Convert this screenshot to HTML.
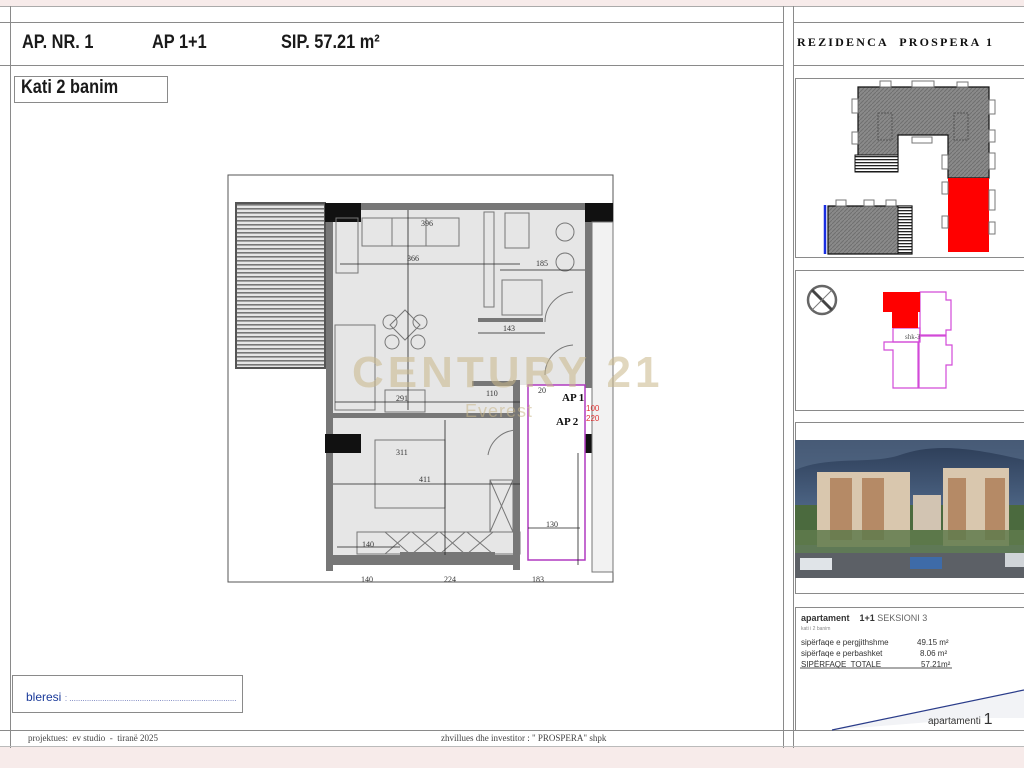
<!DOCTYPE html>
<html><head><meta charset="utf-8">
<style>
*{margin:0;padding:0;box-sizing:border-box}
body{width:1024px;height:768px;background:#fff;position:relative;overflow:hidden;font-family:"Liberation Sans",sans-serif;color:#111}
.a{position:absolute}
.hl{position:absolute;height:0;border-top:1.5px solid #8a8a8a}
.vl{position:absolute;width:0;border-left:1.5px solid #8a8a8a}
.box{position:absolute;border:1.5px solid #8a8a8a}
.t{position:absolute;white-space:nowrap}
.ti{font-size:19px;font-weight:bold;transform:scaleX(.86);transform-origin:left;color:#1a1a1a}
</style></head><body>
<div class="a" style="left:0;top:0;width:1024px;height:6px;background:#f7ebea"></div>
<div class="a" style="left:0;top:747px;width:1024px;height:21px;background:#f7ebea"></div>
<div class="hl" style="left:0;top:6px;width:1024px;border-color:#aaa"></div>
<div class="hl" style="left:0;top:22px;width:783px"></div>
<div class="hl" style="left:0;top:65px;width:783px"></div>
<div class="hl" style="left:793px;top:22px;width:231px"></div>
<div class="hl" style="left:793px;top:65px;width:231px"></div>
<div class="vl" style="left:10px;top:6px;height:742px"></div>
<div class="vl" style="left:783px;top:6px;height:742px"></div>
<div class="vl" style="left:793px;top:6px;height:742px"></div>
<div class="hl" style="left:0;top:730px;width:1024px"></div>
<div class="hl" style="left:0;top:746px;width:1024px;border-color:#bbb"></div>

<div class="t ti" style="left:22px;top:32px">AP. NR. 1</div>
<div class="t ti" style="left:152px;top:32px">AP 1+1</div>
<div class="t ti" style="left:281px;top:32px">SIP. 57.21 m²</div>
<div class="box" style="left:14px;top:76px;width:154px;height:27px"></div>
<div class="t ti" style="left:21px;top:77px">Kati 2 banim</div>
<div class="t" style="left:797px;top:35px;font-size:12px;font-weight:bold;font-family:'Liberation Serif',serif;letter-spacing:2.2px">REZIDENCA&nbsp; PROSPERA 1</div>

<div class="box" style="left:12px;top:675px;width:231px;height:38px"></div>
<div class="t" style="left:26px;top:690px;font-size:12px;color:#1a3a9a">bleresi <span style="color:#7b86c0;font-size:9px;letter-spacing:-0.3px">: ............................................................................</span></div>
<div class="t" style="left:28px;top:733px;font-size:9px;font-family:'Liberation Serif',serif;color:#444">projektues:&nbsp; ev studio &nbsp;-&nbsp; tiranë 2025</div>
<div class="t" style="left:441px;top:733px;font-size:9px;font-family:'Liberation Serif',serif;color:#444">zhvillues dhe investitor : " PROSPERA" shpk</div>

<div class="box" style="left:795px;top:78px;width:240px;height:180px"></div>
<div class="box" style="left:795px;top:270px;width:240px;height:141px"></div>
<div class="box" style="left:795px;top:422px;width:240px;height:172px"></div>
<div class="box" style="left:795px;top:607px;width:240px;height:124px"></div>

<svg class="a" style="left:0;top:0" width="1024" height="768">
<defs>
<pattern id="hs" width="4" height="4" patternUnits="userSpaceOnUse"><rect width="4" height="4" fill="#8a8a8a"/><path d="M0 4L4 0" stroke="#6f6f6f" stroke-width="1"/></pattern>
<pattern id="bal" width="6" height="4" patternUnits="userSpaceOnUse"><rect width="6" height="4" fill="#e6e6e6"/><rect y="0" width="6" height="1.6" fill="#777"/></pattern>
<pattern id="wh" width="3" height="3" patternUnits="userSpaceOnUse"><rect width="3" height="3" fill="#fff"/><rect width="3" height="1.3" fill="#222"/></pattern>
<linearGradient id="sky" x1="0" y1="0" x2="0" y2="1"><stop offset="0" stop-color="#2b3b55"/><stop offset=".5" stop-color="#4d6585"/><stop offset="1" stop-color="#6a7c8e"/></linearGradient>
</defs>
<path d="M858 87H989V178H948V135H898V170H858Z" fill="url(#hs)" stroke="#111" stroke-width="1.2"/>
<rect x="855" y="155" width="43" height="17" fill="url(#wh)" stroke="#111"/>
<rect x="948" y="178" width="41" height="74" fill="#f00"/>
<path d="M828 206H912V254H828Z" fill="url(#hs)" stroke="#111" stroke-width="1.2"/>
<rect x="898" y="206" width="14" height="48" fill="url(#wh)" stroke="#111"/>
<line x1="825" y1="205" x2="825" y2="254" stroke="#1a2ee0" stroke-width="2.5"/>
<g fill="#fff" stroke="#777" stroke-width="1"><rect x="880" y="81" width="11" height="6"/><rect x="912" y="81" width="22" height="6"/><rect x="957" y="82" width="11" height="5"/><rect x="852" y="99" width="6" height="14"/><rect x="852" y="132" width="6" height="12"/><rect x="989" y="100" width="6" height="14"/><rect x="989" y="130" width="6" height="12"/><rect x="989" y="153" width="6" height="16"/><rect x="942" y="155" width="6" height="14"/><rect x="942" y="182" width="6" height="12"/><rect x="942" y="216" width="6" height="12"/><rect x="989" y="190" width="6" height="20"/><rect x="989" y="222" width="6" height="12"/><rect x="836" y="200" width="10" height="6"/><rect x="864" y="200" width="10" height="6"/><rect x="886" y="200" width="10" height="6"/><rect x="912" y="137" width="20" height="6"/></g>
<rect x="878" y="113" width="14" height="27" fill="none" stroke="#555" stroke-dasharray="2 1"/>
<rect x="954" y="113" width="14" height="27" fill="none" stroke="#555" stroke-dasharray="2 1"/>
<circle cx="822" cy="300" r="14" fill="none" stroke="#666" stroke-width="2.5"/>
<line x1="812" y1="290" x2="832" y2="310" stroke="#444" stroke-width="3"/><line x1="832" y1="290" x2="812" y2="310" stroke="#777" stroke-width="1"/>
<path d="M920 292H946V300H951V330H946V335H920Z" fill="none" stroke="#d24ad8" stroke-width="1.2"/>
<path d="M919 336H946V345H952V365H946V388H919Z" fill="none" stroke="#d24ad8" stroke-width="1.2"/>
<path d="M894 342H918V388H893V350H884V342Z" fill="none" stroke="#d24ad8" stroke-width="1.2"/>
<path d="M893 328H920V342H893Z" fill="none" stroke="#d24ad8" stroke-width="1.2"/>
<path d="M883 292H920V312H918V328H892V312H883Z" fill="#f00"/>
<text x="905" y="339" font-size="7" font-family="Liberation Serif" fill="#555">shk-3</text>
<rect x="795" y="440" width="229" height="138" fill="url(#sky)"/>
<path d="M795 470C830 455 870 465 900 455S960 445 1024 460V440H795Z" fill="#5a6f8c" opacity=".6"/>
<rect x="795" y="505" width="229" height="40" fill="#4b6a3e"/>
<rect x="817" y="472" width="93" height="75" fill="#d9c7ae"/>
<rect x="830" y="478" width="22" height="62" fill="#b58a66"/><rect x="862" y="478" width="22" height="62" fill="#b58a66"/>
<rect x="913" y="495" width="28" height="35" fill="#d2c4b2"/>
<rect x="943" y="468" width="66" height="78" fill="#d9c7ae"/>
<rect x="948" y="478" width="18" height="62" fill="#b58a66"/><rect x="985" y="478" width="20" height="62" fill="#b58a66"/>
<rect x="795" y="530" width="229" height="25" fill="#5f7a4c" opacity=".85"/>
<rect x="795" y="553" width="229" height="25" fill="#5c6066"/>
<rect x="800" y="558" width="32" height="12" fill="#e0e4e8"/><rect x="910" y="557" width="32" height="12" fill="#3e6ba8"/><rect x="1005" y="553" width="20" height="14" fill="#d0d4d8"/>
<path d="M832 730L1024 690V718H980Z" fill="#f2f3f6"/>
<line x1="832" y1="730" x2="1024" y2="690" stroke="#2a3c8a" stroke-width="1.2"/>
<line x1="800" y1="668" x2="952" y2="668" stroke="#555" stroke-width="1"/>

<rect x="228" y="175" width="385" height="407" fill="#fff" stroke="#555" stroke-width="1"/>
<rect x="236" y="203" width="89" height="165" fill="url(#bal)" stroke="#555" stroke-width="2"/>
<rect x="333" y="210" width="252" height="348" fill="#e6e6e6"/>
<rect x="513" y="385" width="72" height="175" fill="#fff"/>
<g fill="#777">
<rect x="326" y="203" width="266" height="7"/>
<rect x="326" y="203" width="7" height="368"/>
<rect x="333" y="413" width="187" height="5"/>
<rect x="513" y="380" width="7" height="190"/>
<rect x="585" y="203" width="7" height="185"/>
<rect x="478" y="318" width="65" height="4"/>
<rect x="326" y="555" width="194" height="10"/>
<rect x="400" y="552" width="95" height="10"/>
<rect x="472" y="381" width="41" height="5"/>
</g>
<rect x="325" y="203" width="36" height="19" fill="#111"/>
<rect x="325" y="434" width="36" height="19" fill="#111"/>
<rect x="585" y="203" width="28" height="19" fill="#111"/>
<rect x="585" y="434" width="28" height="19" fill="#111"/>
<rect x="592" y="222" width="21" height="350" fill="#f2f2f2" stroke="#777"/>
<g fill="none" stroke="#777" stroke-width="1">
<rect x="362" y="218" width="97" height="28"/><line x1="392" y1="218" x2="392" y2="246"/><line x1="426" y1="218" x2="426" y2="246"/>
<rect x="336" y="218" width="22" height="55"/>
<rect x="335" y="325" width="40" height="85"/>
<rect x="385" y="390" width="40" height="22"/>
<path d="M405 310L420 325L405 340L390 325Z"/><circle cx="390" cy="322" r="7"/><circle cx="420" cy="322" r="7"/><circle cx="392" cy="342" r="7"/><circle cx="418" cy="342" r="7"/>
<rect x="375" y="440" width="70" height="68"/>
<rect x="357" y="532" width="163" height="22"/>
<path d="M385 532L410 554M410 532L385 554M412 532L438 554M438 532L412 554M440 532L465 554M465 532L440 554M467 532L493 554M493 532L467 554"/>
<rect x="490" y="480" width="23" height="52"/><path d="M490 480L513 532M513 480L490 532"/>
<rect x="505" y="213" width="24" height="35"/><rect x="502" y="280" width="40" height="35"/>
<rect x="484" y="212" width="10" height="95"/>
<circle cx="565" cy="232" r="9"/><circle cx="565" cy="262" r="9"/>
<path d="M573 292A30 30 0 0 0 545 322M573 345A30 30 0 0 0 545 375M518 430A30 30 0 0 0 488 455"/>
</g>
<path d="M528 385H585V560H528Z" fill="none" stroke="#b03ac0" stroke-width="1.5"/>
<g stroke="#222" stroke-width=".8">
<line x1="340" y1="264" x2="520" y2="264"/><line x1="408" y1="210" x2="408" y2="410"/>
<line x1="478" y1="333" x2="545" y2="333"/><line x1="335" y1="402" x2="520" y2="402"/>
<line x1="333" y1="484" x2="520" y2="484"/><line x1="445" y1="420" x2="445" y2="555"/>
<line x1="578" y1="453" x2="578" y2="565"/><line x1="528" y1="528" x2="580" y2="528"/>
<line x1="337" y1="547" x2="400" y2="547"/><line x1="500" y1="270" x2="585" y2="270"/>
</g>
<g font-family="Liberation Serif" font-size="8" fill="#333">
<text x="421" y="226">396</text><text x="407" y="261">366</text><text x="536" y="266">185</text>
<text x="503" y="331">143</text><text x="486" y="396">110</text><text x="538" y="393">20</text>
<text x="396" y="401">291</text><text x="396" y="455">311</text><text x="419" y="482">411</text>
<text x="546" y="527">130</text><text x="362" y="547">140</text><text x="361" y="582">140</text>
<text x="444" y="582">224</text><text x="532" y="582">183</text>
</g>
<g font-family="Liberation Serif" font-size="11" font-weight="bold" fill="#111"><text x="562" y="401">AP 1</text><text x="556" y="425">AP 2</text></g>
<g font-family="Liberation Sans" font-size="8" fill="#d33"><text x="586" y="411">100</text><text x="586" y="421">220</text></g>
<text x="352" y="387" font-family="Liberation Sans" font-size="44" font-weight="bold" fill="#c9b88a" opacity=".55" letter-spacing="4">CENTURY 21</text>
<text x="465" y="417" font-family="Liberation Sans" font-size="18" fill="#c9b88a" opacity=".55" letter-spacing="1">Everest</text>
</svg>

<div class="t" style="left:801px;top:613px;font-size:9px;font-weight:bold;color:#333">apartament&nbsp;&nbsp;&nbsp; 1+1 <span style="font-weight:normal;color:#666">SEKSIONI 3</span></div>
<div class="t" style="left:801px;top:626px;font-size:5px;color:#888">kati i 2 banim</div>
<div class="t" style="left:801px;top:638px;font-size:8px;color:#333">sipërfaqe e pergjithshme</div>
<div class="t" style="left:917px;top:638px;font-size:8px;color:#333">49.15 m²</div>
<div class="t" style="left:801px;top:649px;font-size:8px;color:#333">sipërfaqe e perbashket</div>
<div class="t" style="left:920px;top:649px;font-size:8px;color:#333">8.06 m²</div>
<div class="t" style="left:801px;top:660px;font-size:8px;color:#333">SIPËRFAQE&nbsp; TOTALE</div>
<div class="t" style="left:921px;top:660px;font-size:8px;color:#333">57.21m²</div>
<div class="t" style="left:928px;top:711px;font-size:10px;color:#333">apartamenti <span style="font-size:16px">1</span></div>
</body></html>
